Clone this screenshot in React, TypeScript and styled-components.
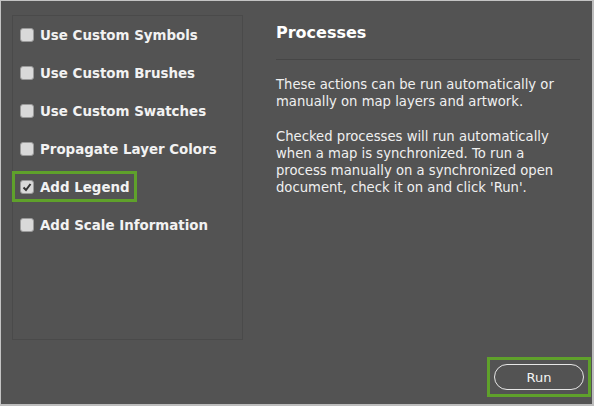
import React from "react";
import styled, { createGlobalStyle } from "styled-components";

const Global = createGlobalStyle`
  html, body { margin: 0; padding: 0; background: #535353; }
  * { box-sizing: border-box; }
`;

const Frame = styled.div`
  width: 594px;
  height: 406px;
  background: #535353;
  border-top: 1px solid #c4c4c4;
  border-left: 1px solid #c4c4c4;
  border-right: 2px solid #bdbdbd;
  border-bottom: 2px solid #bdbdbd;
  display: grid;
  grid-template-columns: 231px 1fr;
  grid-template-rows: 1fr auto;
  column-gap: 33px;
  padding: 14px 10px 7px 11px;
  font-family: "DejaVu Sans", Verdana, sans-serif;
  color: #f2f2f2;
`;

const ListPanel = styled.div`
  border: 1px solid #4a4a4a;
  height: 325px;
  padding: 0 0 0 7px;
  display: flex;
  flex-direction: column;
`;

const Row = styled.label`
  display: flex;
  align-items: center;
  gap: 6px;
  height: 38px;
  font-weight: bold;
  font-size: 13.4px;
  position: relative;
`;

const Highlight = styled.span`
  position: absolute;
  left: -8px;
  top: 3px;
  width: 125px;
  height: 31px;
  border: 3px solid #5fa12b;
`;

const Box = styled.span`
  width: 14px;
  height: 14px;
  border-radius: 3px;
  background: #d9d9d9;
  border: 1px solid #9a9a9a;
  display: flex;
  align-items: center;
  justify-content: center;
  flex: none;
`;

const Info = styled.div`
  padding: 8px 0 0 0;
  display: flex;
  flex-direction: column;
`;

const Title = styled.h2`
  margin: 0;
  font-size: 16px;
  font-weight: bold;
  color: #ffffff;
  height: 20px;
  line-height: 20px;
`;

const Divider = styled.div`
  height: 1px;
  background: #464646;
  margin: 16px 0 0 0;
  width: 304px;
`;

const Para = styled.p`
  margin: 16px 0 0 0;
  width: 296px;
  font-size: 13.2px;
  line-height: 17px;
  color: #f0f0f0;
  & + & { margin-top: 18px; }
`;

const Footer = styled.div`
  grid-column: 1 / 3;
  display: flex;
  justify-content: flex-end;
  align-items: center;
`;

const RunWrap = styled.div`
  border: 3px solid #5fa12b;
  padding: 4px 4px;
  margin-right: -9px;
  margin-top: 1px;
`;

const RunButton = styled.button`
  width: 90px;
  height: 26px;
  border-radius: 13px;
  border: 1px solid #e6e6e6;
  background: transparent;
  color: #f4f4f4;
  font-family: "DejaVu Sans", Verdana, sans-serif;
  font-size: 13px;
  padding: 0;
`;

const items = [
  "Use Custom Symbols",
  "Use Custom Brushes",
  "Use Custom Swatches",
  "Propagate Layer Colors",
  "Add Legend",
  "Add Scale Information",
];

const Check = () => (
  <svg width="10" height="10" viewBox="0 0 10 10">
    <path d="M1.5 5.5 L4 8 L8.5 2" stroke="#333" strokeWidth="2" fill="none" />
  </svg>
);

export default function App() {
  return (
    <>
      <Global />
      <Frame>
        <ListPanel>
          {items.map((t) => {
            const checked = t === "Add Legend";
            return (
              <Row key={t}>
                {checked && <Highlight />}
                <Box>{checked && <Check />}</Box>
                {t}
              </Row>
            );
          })}
        </ListPanel>
        <Info>
          <Title>Processes</Title>
          <Divider />
          <Para>
            These actions can be run automatically or manually on map layers
            and artwork.
          </Para>
          <Para>
            Checked processes will run automatically when a map is
            synchronized. To run a process manually on a synchronized open
            document, check it on and click 'Run'.
          </Para>
        </Info>
        <Footer>
          <RunWrap>
            <RunButton>Run</RunButton>
          </RunWrap>
        </Footer>
      </Frame>
    </>
  );
}
